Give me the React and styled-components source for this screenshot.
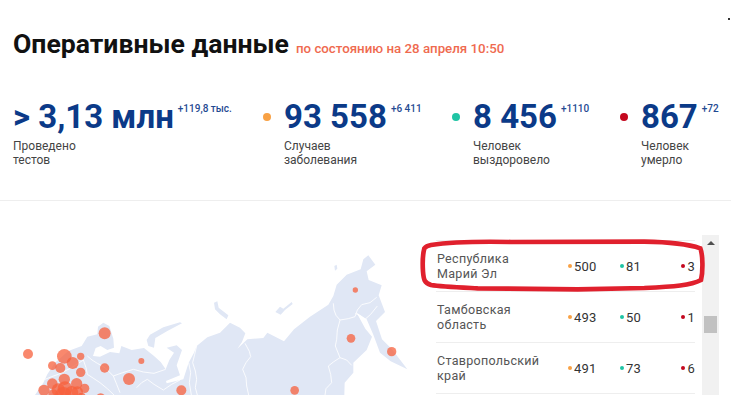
import React from 'react'
import styled, { createGlobalStyle } from 'styled-components'

const GlobalStyle = createGlobalStyle`
  html, body { margin: 0; padding: 0; background: #fff; }
  body { font-family: Roboto, "Liberation Sans", sans-serif; overflow: hidden; }
`

const Page = styled.div`
  position: relative;
  width: 731px;
  height: 412px;
  overflow: hidden;
`

const CornerMark = styled.span`
  position: absolute;
  top: 18px;
  right: 1px;
  width: 2px;
  height: 2px;
  background: #333;
`

const Header = styled.div`
  display: flex;
  align-items: baseline;
  padding: 28px 0 0 13px;
  height: 48px;
`

const Title = styled.h1`
  margin: 0;
  font-size: 26.6px;
  line-height: 32px;
  font-weight: 700;
  color: #111;
`

const Subtitle = styled.span`
  margin-left: 7px;
  font-size: 13.3px;
  font-weight: 500;
  color: #ef6a4f;
`

const Stats = styled.div`
  display: flex;
  height: 105px;
  padding: 19px 0 0 13px;
  border-bottom: 1px solid #eeeeee;
`

const Stat = styled.div`
  display: flex;
  width: ${props => props.width}px;
`

const Dot = styled.span`
  flex: none;
  width: 8px;
  height: 8px;
  margin: 18px 13px 0 0;
  border-radius: 50%;
  background: ${props => props.color};
`

const Value = styled.div`
  display: flex;
  align-items: flex-start;
  height: 44px;
`

const Number = styled.span`
  font-size: 33px;
  line-height: 40px;
  margin-top: 2px;
  font-weight: 700;
  color: #0b3a88;
  white-space: nowrap;
`

const Delta = styled.span`
  margin: 8px 0 0 4px;
  font-size: 10px;
  line-height: 12px;
  font-weight: 500;
  color: #1f4a92;
  white-space: nowrap;
`

const Label = styled.div`
  font-size: 12px;
  line-height: 14px;
  color: #444;
`

const Content = styled.div`
  display: flex;
  height: 211px;
`

const MapBox = styled.div`
  flex: none;
  width: 436px;
  height: 206px;
  margin-top: 5px;
`

const TableBox = styled.div`
  position: relative;
  display: flex;
  align-items: flex-start;
  margin-top: 34px;
  height: 160px;
`

const Rows = styled.div`
  width: 259px;
  margin-right: 7px;
  padding-top: 5px;
`

const Row = styled.div`
  display: grid;
  grid-template-columns: 132px 52px 60px 1fr;
  align-items: center;
  height: 50px;
  border-top: 1px solid #eeeeee;
  &:last-child { border-bottom: 1px solid #eeeeee; }
`

const Region = styled.div`
  padding-left: 1px;
  font-size: 12.5px;
  line-height: 15px;
  letter-spacing: 0.3px;
  color: #555;
`

const Cell = styled.div`
  display: flex;
  align-items: center;
  justify-content: ${props => (props.$end ? 'flex-end' : 'flex-start')};
  font-size: 13px;
  letter-spacing: 0.2px;
  color: #333;
`

const SmallDot = styled.span`
  width: 4px;
  height: 4px;
  margin-right: 2px;
  border-radius: 50%;
  background: ${props => props.color};
`

const Track = styled.div`
  display: flex;
  flex-direction: column;
  align-items: center;
  width: 17px;
  height: 160px;
  background: #f1f1f1;
`

const Arrow = styled.span`
  margin-top: 6px;
  border-left: 4px solid transparent;
  border-right: 4px solid transparent;
  border-bottom: 4px solid #505050;
`

const Thumb = styled.span`
  width: 13px;
  height: 17px;
  margin-top: 71px;
  background: #c1c1c1;
`

const Highlight = styled.svg`
  position: absolute;
  top: -5px;
  left: -25px;
  pointer-events: none;
`

const ORANGE = '#f8a144'
const GREEN = '#1fc4a4'
const RED = '#c4081e'

const stats = [
  { value: '> 3,13 млн', delta: '+119,8 тыс.', label: ['Проведено', 'тестов'], width: 250 },
  { value: '93 558', delta: '+6 411', label: ['Случаев', 'заболевания'], color: ORANGE, width: 189 },
  { value: '8 456', delta: '+1110', label: ['Человек', 'выздоровело'], color: GREEN, width: 168 },
  { value: '867', delta: '+72', label: ['Человек', 'умерло'], color: RED, width: 100 },
]

const regions = [
  { name: ['Республика', 'Марий Эл'], sick: 500, healed: 81, dead: 3 },
  { name: ['Тамбовская', 'область'], sick: 493, healed: 50, dead: 1 },
  { name: ['Ставропольский', 'край'], sick: 491, healed: 73, dead: 6 },
]

const bubbles = [
  [84, 444, 15], [314, 382, 18], [193, 451, 22], [242, 451, 11], [157, 479, 13],
  [181, 486, 15], [218, 471, 18], [242, 499, 14], [314, 486, 14], [424, 465, 9],
  [387, 519, 18], [544, 553, 15], [884, 553, 13], [1053, 397, 13], [1175, 437, 14],
  [1066, 252, 8], [193, 520, 17], [157, 533, 16], [230, 533, 17], [132, 553, 17],
  [254, 547, 14], [302, 578, 16], [175, 552, 20], [195, 548, 22], [215, 560, 20],
  [232, 558, 17], [160, 565, 15], [245, 572, 12], [190, 568, 25],
]

const land = 'M105 567 L130 530 L142 505 L165 470 L205 435 L245 420 L262 392 L292 385 L294 362 L310 350 L328 360 L340 398 L342 425 L322 432 L302 420 L287 426 L279 450 L300 452 L330 438 L358 442 L364 420 L395 432 L432 426 L462 450 L482 468 L497 490 L508 462 L522 440 L500 425 L530 418 L546 432 L530 478 L540 508 L498 525 L500 532 L550 520 L566 470 L582 440 L590 420 L622 394 L660 380 L690 350 L720 365 L736 382 L726 408 L712 428 L742 400 L790 396 L802 380 L852 406 L882 370 L930 332 L985 296 L1000 270 L1010 236 L1040 206 L1082 190 L1090 160 L1105 148 L1126 176 L1100 196 L1106 222 L1145 238 L1136 268 L1155 318 L1128 345 L1146 400 L1176 430 L1222 490 L1172 466 L1140 440 L1120 386 L1100 340 L1070 320 L1096 368 L1116 392 L1100 432 L1060 470 L1060 500 L1034 530 L1033 567 Z'

const islands = [
  'M440 402 L450 386 L490 364 L540 349 L546 352 L502 375 L466 396 L462 425 L445 420 Z',
  'M642 290 L652 286 L656 305 L685 328 L680 340 L660 325 L645 310 Z',
  'M826 318 L840 302 L850 308 L875 288 L878 294 L855 312 L842 326 Z',
  'M1003 180 L1010 176 L1012 188 L1005 194 Z',
]

const borders = [
  'M735 412 L748 436 L752 452 L738 470 L728 490 L738 515 L740 540 L746 567',
  'M590 420 L584 445 L578 470 L586 495 L590 520 L586 545 L592 567',
  'M566 470 L572 500 L568 530 L574 567',
  'M1000 292 L1002 312 L1008 328 L1020 342 L1045 338 L1065 332 L1072 312 L1085 296 L1110 290 L1130 274',
  'M1020 342 L1012 372 L1010 400 L1006 420 L1020 455 L1000 468 L985 480 L992 505 L995 530 L978 548 L975 567',
  'M1020 455 L1040 462 L1055 478',
  'M1066 322 L1082 330 L1095 340 L1112 325 L1132 300',
  'M262 450 L276 462 L292 472 L315 485 L340 510 L368 500 L400 490 L430 498 L462 502 L497 490',
  'M410 545 L425 530 L442 520 L462 535 L490 552 L515 535 L540 522',
  'M135 520 L155 512 L175 505 L215 485 L250 462 L258 485 L262 505 L282 518 L300 530 L322 548 L342 567',
  'M340 510 L350 535 L360 560',
]

const RussiaMap = () => (
  <svg width="420" height="206" viewBox="0 0 1260 618">
    <defs>
      <clipPath id="mapClip">
        <rect x="0" y="0" width="1260" height="567" />
      </clipPath>
    </defs>
    <g clipPath="url(#mapClip)">
      <path d={land} fill="#e0e7f5" />
      {islands.map(d => <path key={d} d={d} fill="#e0e7f5" />)}
      {borders.map(d => <path key={d} d={d} fill="none" stroke="#fff" strokeWidth="2.5" />)}
      {bubbles.map(([cx, cy, r]) => (
        <circle key={`${cx}-${cy}`} cx={cx} cy={cy} r={r} fill="#f7603c" fillOpacity="0.75" />
      ))}
    </g>
  </svg>
)

const App = () => (
  <Page>
    <GlobalStyle />
    <CornerMark />
    <Header>
      <Title>Оперативные данные</Title>
      <Subtitle>по состоянию на 28 апреля 10:50</Subtitle>
    </Header>
    <Stats>
      {stats.map(s => (
        <Stat key={s.value} width={s.width}>
          {s.color && <Dot color={s.color} />}
          <div>
            <Value>
              <Number>{s.value}</Number>
              <Delta>{s.delta}</Delta>
            </Value>
            <Label>{s.label[0]}<br />{s.label[1]}</Label>
          </div>
        </Stat>
      ))}
    </Stats>
    <Content>
      <MapBox>
        <RussiaMap />
      </MapBox>
      <TableBox>
        <Rows>
          {regions.map(r => (
            <Row key={r.name[0]}>
              <Region>{r.name[0]}<br />{r.name[1]}</Region>
              <Cell><SmallDot color={ORANGE} />{r.sick}</Cell>
              <Cell><SmallDot color={GREEN} />{r.healed}</Cell>
              <Cell $end><SmallDot color={RED} />{r.dead}</Cell>
            </Row>
          ))}
        </Rows>
        <Track>
          <Arrow />
          <Thumb />
        </Track>
        <Highlight width="320" height="70" viewBox="0 0 960 210">
          <path
            d="M60 45 C120 36 200 34 300 36 L700 35 C770 36 830 42 868 55 C876 75 876 125 870 150 C840 166 790 170 700 174 L500 178 L200 175 C140 172 90 170 60 165 C40 158 38 150 36 125 C34 95 36 70 40 55 C44 50 50 47 60 45 Z"
            fill="none"
            stroke="#e0202d"
            strokeWidth="14"
          />
        </Highlight>
      </TableBox>
    </Content>
  </Page>
)

export default App
